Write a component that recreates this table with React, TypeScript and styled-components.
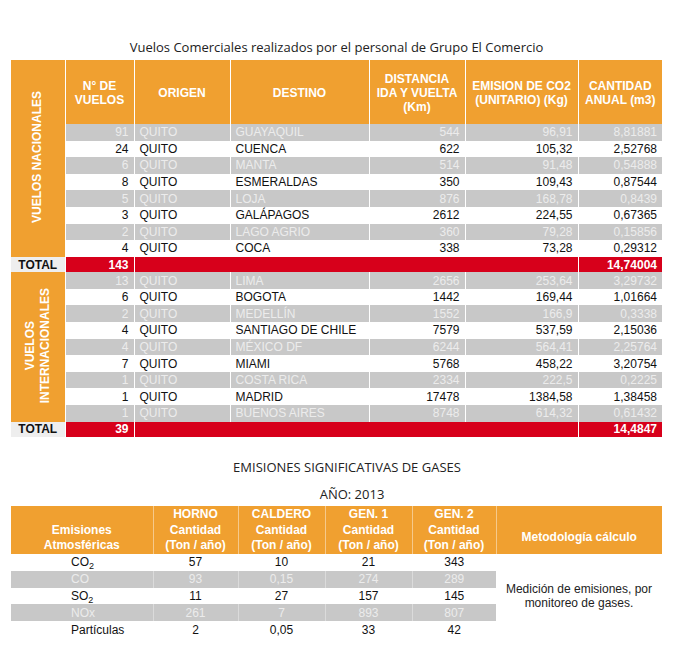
import React from "react";
import styled, { createGlobalStyle } from "styled-components";

const ORANGE = "#f0a030";
const RED = "#d7001b";
const GRAY = "#c8c8c8";
const GRAY_TEXT = "#ececec";
const INK = "#111";

const GlobalStyle = createGlobalStyle`
  html, body { margin: 0; padding: 0; background: #fff; }
  body { font-family: "Liberation Sans", Arial, sans-serif; }
`;

const Page = styled.div`
  width: 673px;
  padding: 0 11px;
  box-sizing: border-box;
`;

const Heading = styled.div<{ $top: number; $size: number; $shift?: number }>`
  font-family: "Open Sans", sans-serif;
  font-size: ${(p) => p.$size}px;
  line-height: 19px;
  color: #222;
  text-align: center;
  margin-top: ${(p) => p.$top}px;
  padding-left: ${(p) => (p.$shift ?? 0) * 2}px;
`;

const FlightTable = styled.table`
  width: 651px;
  table-layout: fixed;
  border-collapse: collapse;
  font-size: 12px;
  margin-top: 3px;
`;

const HeadRow = styled.tr`
  height: 64px;
`;

const HeadCell = styled.th`
  background: ${ORANGE};
  color: #fff;
  font-weight: bold;
  font-size: 12px;
  line-height: 14px;
  text-align: center;
  vertical-align: middle;
  padding: 2px 2px 0;
  border-left: 1px solid #fff;
`;

const SideCell = styled.th`
  background: ${ORANGE};
  color: #fff;
  font-weight: bold;
  font-size: 12px;
  padding: 0;
  text-align: center;
  vertical-align: middle;
`;

const SideLabel = styled.div`
  display: inline-block;
  writing-mode: vertical-rl;
  transform: rotate(180deg);
  line-height: 15px;
  text-align: center;
  white-space: nowrap;
`;

const Row = styled.tr<{ $shade: boolean }>`
  height: 16.6px;
  background: ${(p) => (p.$shade ? GRAY : "#fff")};
  color: ${(p) => (p.$shade ? GRAY_TEXT : INK)};
`;

const Cell = styled.td<{ $align?: "left" | "right" | "center" }>`
  padding: 0 5px;
  text-align: ${(p) => p.$align ?? "left"};
  border-left: 1px solid #fff;
  white-space: nowrap;
  line-height: 14px;
  vertical-align: middle;
  overflow: hidden;
`;

const TotalRow = styled.tr`
  height: 15.5px;
`;

const TotalLabel = styled.td`
  background: #eeeeee;
  color: ${INK};
  font-weight: bold;
  text-align: center;
  line-height: 14px;
  padding: 0;
`;

const TotalCell = styled.td<{ $align?: "left" | "right" }>`
  background: ${RED};
  color: #fff;
  font-weight: bold;
  text-align: ${(p) => p.$align ?? "right"};
  line-height: 14px;
  padding: 0 5px;
  border-left: 1px solid #fff;
`;

const GasTable = styled.table`
  width: 651px;
  table-layout: fixed;
  border-collapse: collapse;
  font-size: 12px;
  margin-top: 2px;
`;

const GasHeadRow = styled.tr`
  height: 48px;
`;

const GasHead = styled.th<{ $pb?: number }>`
  background: ${ORANGE};
  color: #fff;
  font-weight: bold;
  font-size: 12px;
  line-height: 14.5px;
  text-align: center;
  vertical-align: bottom;
  padding: 0 2px ${(p) => p.$pb ?? 2}px;
  border-left: 1px solid #f6c98a;
  &:first-child { border-left: none; }
`;

const HeadTop = styled.div`
  margin-bottom: 2px;
`;

const GasRow = styled.tr<{ $shade: boolean }>`
  height: 16.8px;
  background: ${(p) => (p.$shade ? GRAY : "#fff")};
  color: ${(p) => (p.$shade ? GRAY_TEXT : INK)};
`;

const GasCell = styled.td<{ $label?: boolean }>`
  text-align: ${(p) => (p.$label ? "left" : "center")};
  padding: 0 0 0 ${(p) => (p.$label ? 60 : 0)}px;
  line-height: 14px;
  vertical-align: middle;
  white-space: nowrap;
  border-left: ${(p) => (p.$label ? "none" : "1px solid rgba(255,255,255,0.35)")};
`;

const MethodCell = styled.td`
  background: #fff;
  color: #222;
  text-align: center;
  vertical-align: middle;
  line-height: 14.5px;
  padding: 0 6px;
`;

const Sub = styled.sub`
  font-size: 9px;
  line-height: 0;
  vertical-align: -3px;
`;

type Flight = [string, string, string, string, string, string];

const nacionales: Flight[] = [
  ["91", "QUITO", "GUAYAQUIL", "544", "96,91", "8,81881"],
  ["24", "QUITO", "CUENCA", "622", "105,32", "2,52768"],
  ["6", "QUITO", "MANTA", "514", "91,48", "0,54888"],
  ["8", "QUITO", "ESMERALDAS", "350", "109,43", "0,87544"],
  ["5", "QUITO", "LOJA", "876", "168,78", "0,8439"],
  ["3", "QUITO", "GALÁPAGOS", "2612", "224,55", "0,67365"],
  ["2", "QUITO", "LAGO AGRIO", "360", "79,28", "0,15856"],
  ["4", "QUITO", "COCA", "338", "73,28", "0,29312"],
];

const internacionales: Flight[] = [
  ["13", "QUITO", "LIMA", "2656", "253,64", "3,29732"],
  ["6", "QUITO", "BOGOTA", "1442", "169,44", "1,01664"],
  ["2", "QUITO", "MEDELLÍN", "1552", "166,9", "0,3338"],
  ["4", "QUITO", "SANTIAGO DE CHILE", "7579", "537,59", "2,15036"],
  ["4", "QUITO", "MÉXICO DF", "6244", "564,41", "2,25764"],
  ["7", "QUITO", "MIAMI", "5768", "458,22", "3,20754"],
  ["1", "QUITO", "COSTA RICA", "2334", "222,5", "0,2225"],
  ["1", "QUITO", "MADRID", "17478", "1384,58", "1,38458"],
  ["1", "QUITO", "BUENOS AIRES", "8748", "614,32", "0,61432"],
];

const FlightCells = ({ f }: { f: Flight }) => (
  <>
    <Cell $align="right">{f[0]}</Cell>
    <Cell>{f[1]}</Cell>
    <Cell>{f[2]}</Cell>
    <Cell $align="right">{f[3]}</Cell>
    <Cell $align="right">{f[4]}</Cell>
    <Cell $align="right">{f[5]}</Cell>
  </>
);

type Gas = { label: React.ReactNode; vals: string[] };
const gases: Gas[] = [
  { label: <>CO<Sub>2</Sub></>, vals: ["57", "10", "21", "343"] },
  { label: "CO", vals: ["93", "0,15", "274", "289"] },
  { label: <>SO<Sub>2</Sub></>, vals: ["11", "27", "157", "145"] },
  { label: "NOx", vals: ["261", "7", "893", "807"] },
  { label: "Partículas", vals: ["2", "0,05", "33", "42"] },
];

const gasHeads = ["HORNO", "CALDERO", "GEN. 1", "GEN. 2"];

export default function App() {
  return (
    <Page>
      <GlobalStyle />
      <Heading $top={38} $size={13}>
        Vuelos Comerciales realizados por el personal de Grupo El Comercio
      </Heading>
      <FlightTable>
        <colgroup>
          <col style={{ width: 54 }} />
          <col style={{ width: 69 }} />
          <col style={{ width: 96 }} />
          <col style={{ width: 139 }} />
          <col style={{ width: 96 }} />
          <col style={{ width: 113 }} />
          <col style={{ width: 84 }} />
        </colgroup>
        <tbody>
          <HeadRow>
            <SideCell rowSpan={9}>
              <SideLabel>VUELOS NACIONALES</SideLabel>
            </SideCell>
            <HeadCell>N° DE<br />VUELOS</HeadCell>
            <HeadCell>ORIGEN</HeadCell>
            <HeadCell>DESTINO</HeadCell>
            <HeadCell>DISTANCIA<br />IDA Y VUELTA<br />(Km)</HeadCell>
            <HeadCell>EMISION DE CO2<br />(UNITARIO) (Kg)</HeadCell>
            <HeadCell>CANTIDAD<br />ANUAL (m3)</HeadCell>
          </HeadRow>
          {nacionales.map((f, i) => (
            <Row key={f[2]} $shade={i % 2 === 0}>
              <FlightCells f={f} />
            </Row>
          ))}
          <TotalRow>
            <TotalLabel>TOTAL</TotalLabel>
            <TotalCell>143</TotalCell>
            <TotalCell colSpan={4} />
            <TotalCell>14,74004</TotalCell>
          </TotalRow>
          {internacionales.map((f, i) => (
            <Row key={f[2]} $shade={i % 2 === 0}>
              {i === 0 && (
                <SideCell rowSpan={9}>
                  <SideLabel>VUELOS<br />INTERNACIONALES</SideLabel>
                </SideCell>
              )}
              <FlightCells f={f} />
            </Row>
          ))}
          <TotalRow>
            <TotalLabel>TOTAL</TotalLabel>
            <TotalCell>39</TotalCell>
            <TotalCell colSpan={4} />
            <TotalCell>14,4847</TotalCell>
          </TotalRow>
        </tbody>
      </FlightTable>

      <Heading $top={21} $size={13} $shift={10.5}>
        EMISIONES SIGNIFICATIVAS DE GASES
      </Heading>
      <Heading $top={8} $size={13} $shift={15.5}>
        AÑO: 2013
      </Heading>

      <GasTable>
        <colgroup>
          <col style={{ width: 142 }} />
          <col style={{ width: 85 }} />
          <col style={{ width: 87 }} />
          <col style={{ width: 87 }} />
          <col style={{ width: 84 }} />
          <col style={{ width: 166 }} />
        </colgroup>
        <tbody>
          <GasHeadRow>
            <GasHead $pb={2}>Emisiones<br />Atmosféricas</GasHead>
            {gasHeads.map((h) => (
              <GasHead key={h}>
                <HeadTop>{h}</HeadTop>
                Cantidad<br />(Ton / año)
              </GasHead>
            ))}
            <GasHead $pb={10}>Metodología cálculo</GasHead>
          </GasHeadRow>
          {gases.map((g, i) => (
            <GasRow key={i} $shade={i % 2 === 1}>
              <GasCell $label>{g.label}</GasCell>
              {g.vals.map((v, j) => (
                <GasCell key={j}>{v}</GasCell>
              ))}
              {i === 0 && (
                <MethodCell rowSpan={5}>
                  Medición de emisiones, por<br />monitoreo de gases.
                </MethodCell>
              )}
            </GasRow>
          ))}
        </tbody>
      </GasTable>
    </Page>
  );
}
